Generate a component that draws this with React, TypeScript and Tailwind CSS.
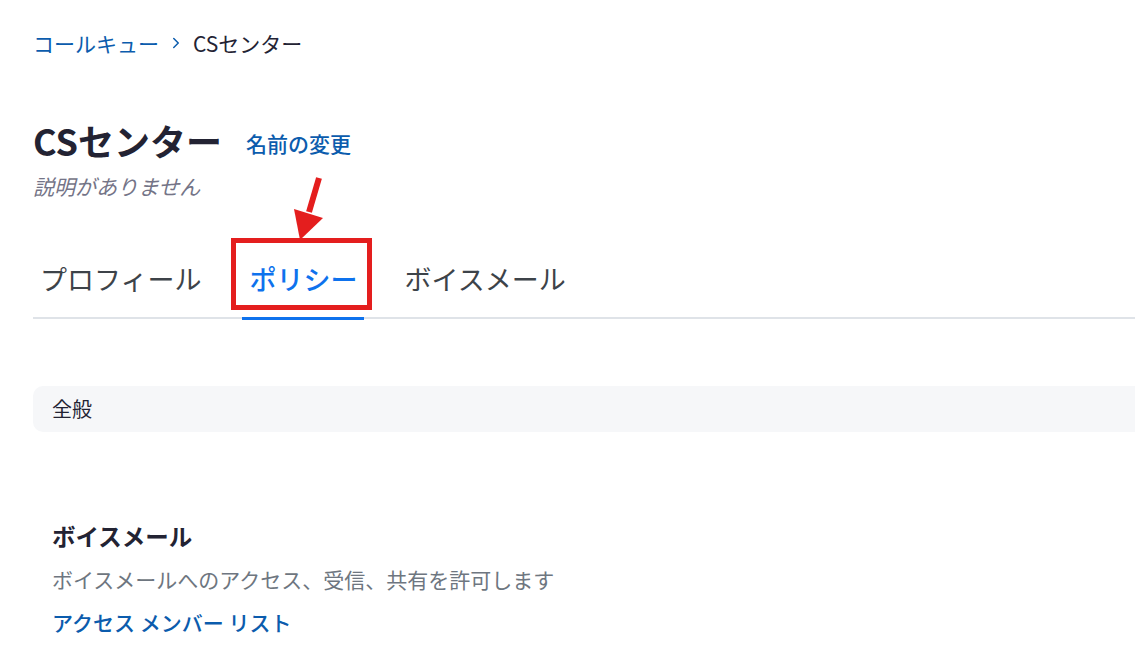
import { ChevronRight } from 'lucide-react';

const font = { fontFamily: '"Noto Sans CJK JP", "Noto Sans", sans-serif' };

export default function App() {
  return (
    <div className="min-h-screen w-full overflow-hidden bg-white pl-[33px]" style={font}>
      {/* Breadcrumb */}
      <div className="flex items-center pt-[29px] text-[21px] leading-[28px]">
        <span className="text-[#0b5cad]">コールキュー</span>
        <ChevronRight className="mx-[8px] h-[18px] w-[18px] text-[#0b5cad]" strokeWidth={2} />
        <span className="text-[#232333]">CSセンター</span>
      </div>

      {/* Title */}
      <div className="mt-[59px] flex items-end">
        <h1 className="text-[36px] font-bold leading-[48px] text-[#232333]">CSセンター</h1>
        <span className="mb-[6px] ml-[24px] text-[21px] font-medium leading-[30px] text-[#0b5cad]">名前の変更</span>
      </div>
      <p className="mt-[8px] text-[21px] italic leading-[28px] text-[#747487]">説明がありません</p>

      {/* Tabs */}
      <div className="relative mt-[59px] flex border-b-2 border-[#dfe3e8] text-[27px] leading-[40px]">
        <div className="pb-[18px] pl-[7px] pr-[41px] text-[#3d4349]">プロフィール</div>
        <div className="relative mb-[-3px] border-b-[3px] border-[#0e72ed] px-[7px] pb-[18px] font-medium text-[#0e72ed]">
          ポリシー
          <div className="absolute left-[-11px] top-[-21px] h-[72px] w-[141px] border-[5px] border-[#e41e1e]" />
        </div>
        <div className="pb-[18px] pl-[40px] text-[#3d4349]">ボイスメール</div>
        <svg className="absolute left-[247px] top-[-89px]" width="60" height="75" viewBox="0 0 60 75">
          <line x1="39" y1="8" x2="29" y2="42" stroke="#e41e1e" strokeWidth="6" />
          <polygon points="14,39 43,48 20,70" fill="#e41e1e" />
        </svg>
      </div>

      {/* General section */}
      <div className="mt-[67px] w-[1200px] rounded-l-[10px] bg-[#f6f7f9] py-[8px] pl-[19px] text-[20px] leading-[30px] text-[#232333]">
        全般
      </div>

      <div className="mt-[88px] pl-[19px]">
        <h2 className="text-[23.5px] font-bold leading-[32px] text-[#232333]">ボイスメール</h2>
        <p className="mt-[13px] text-[21px] leading-[28px] text-[#6e7680]">ボイスメールへのアクセス、受信、共有を許可します</p>
        <p className="mt-[15px] text-[21px] font-medium leading-[28px] text-[#0b5cad]">アクセス メンバー リスト</p>
      </div>
    </div>
  );
}
